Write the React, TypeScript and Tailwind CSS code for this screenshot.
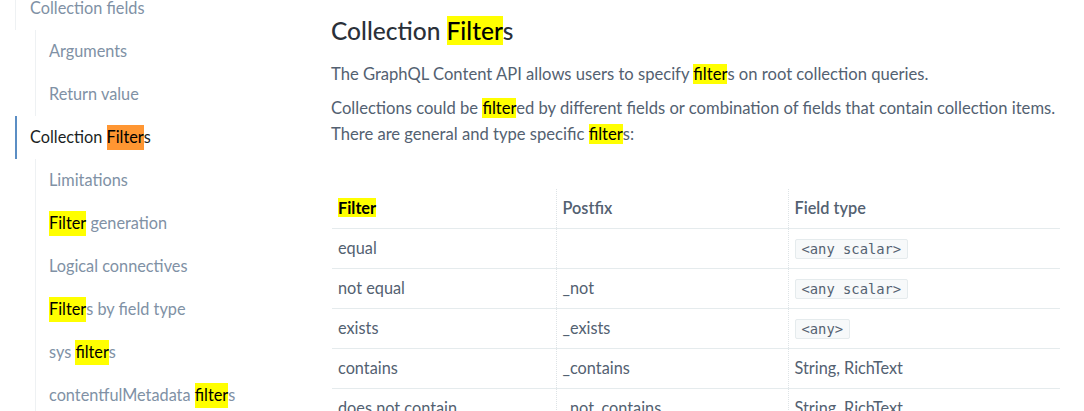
import React from "react";

const font = { fontFamily: "Lato, 'Noto Sans', sans-serif" };

function Hl({ children, active = false }: { children: React.ReactNode; active?: boolean }) {
  return <span className={`${active ? "bg-[#ff9632]" : "bg-[#ffff00]"} text-black`}>{children}</span>;
}

function Code({ children }: { children: React.ReactNode }) {
  return (
    <code className="inline-block rounded-[2px] border border-[#e5ebed] bg-[#f7f9fa] px-[6px] text-[13.8px] leading-[18px] text-[#536171] [font-family:'DejaVu_Sans_Mono',monospace]">
      {children}
    </code>
  );
}

const nested1 = ["Arguments", "Return value"];

const rows: { filter: string; postfix: string; type: React.ReactNode }[] = [
  { filter: "equal", postfix: "", type: <Code>{"<any scalar>"}</Code> },
  { filter: "not equal", postfix: "_not", type: <Code>{"<any scalar>"}</Code> },
  { filter: "exists", postfix: "_exists", type: <Code>{"<any>"}</Code> },
  { filter: "contains", postfix: "_contains", type: "String, RichText" },
  { filter: "does not contain", postfix: "_not_contains", type: "String, RichText" },
];

export default function App() {
  return (
    <div className="flex h-[411px] w-[1084px] overflow-hidden bg-white text-[16px]" style={font}>
      <aside className="w-[331px] shrink-0 pl-[15px]">
        <ul className="-mt-[13px] text-[16.3px] text-[#8091a5]">
          <li className="flex h-[43px] items-center border-l border-[#eef1f3] pl-[14px]">Collection fields</li>
          <li className="ml-[20px] border-l border-[#eef1f3]">
            {nested1.map((t) => (
              <div key={t} className="flex h-[43px] items-center pl-[13px]">{t}</div>
            ))}
          </li>
          <li className="flex h-[43px] items-center border-l-[2px] border-[#5b8ec4] pl-[13px] text-[#1b1f24]">
            Collection&nbsp;<Hl active>Filter</Hl>s
          </li>
          <li className="ml-[20px] border-l border-[#eef1f3]">
            <div className="flex h-[43px] items-center pl-[13px]">Limitations</div>
            <div className="flex h-[43px] items-center pl-[13px]"><Hl>Filter</Hl>&nbsp;generation</div>
            <div className="flex h-[43px] items-center pl-[13px]">Logical connectives</div>
            <div className="flex h-[43px] items-center pl-[13px]"><Hl>Filter</Hl>s by field type</div>
            <div className="flex h-[43px] items-center pl-[13px]">sys&nbsp;<Hl>filter</Hl>s</div>
            <div className="flex h-[43px] items-center pl-[13px]">contentfulMetadata&nbsp;<Hl>filter</Hl>s</div>
          </li>
        </ul>
      </aside>

      <main className="flex-1 pr-[24px] text-[#536171]">
        <h1 className="mt-[16px] text-[24.5px] font-medium leading-[30px] text-[#2a3039]">
          Collection <Hl>Filter</Hl>s
        </h1>
        <p className="mt-[15px] text-[16.6px] leading-[26px]">
          The GraphQL Content API allows users to specify <Hl>filter</Hl>s on root collection queries.
        </p>
        <p className="mt-[8px] text-[16.6px] leading-[26px]">
          Collections could be <Hl>filter</Hl>ed by different fields or combination of fields that contain collection items.
          <br />
          There are general and type specific <Hl>filter</Hl>s:
        </p>

        <table className="mt-[42px] ml-px w-[728px] border-collapse text-left text-[16.3px]">
          <thead>
            <tr className="h-[39px] border-b border-[#e5ebed]">
              <th className="w-[224px] px-[6px] font-bold text-black">
                <Hl>Filter</Hl>
              </th>
              <th className="w-[232px] border-l border-dotted border-[#dde3e6] px-[6px] font-semibold">Postfix</th>
              <th className="border-l border-dotted border-[#dde3e6] px-[6px] font-semibold">Field type</th>
            </tr>
          </thead>
          <tbody>
            {rows.map((r) => (
              <tr key={r.filter} className="h-[40px] border-b border-[#e5ebed]">
                <td className="px-[6px]">{r.filter}</td>
                <td className="border-l border-dotted border-[#dde3e6] px-[6px]">{r.postfix}</td>
                <td className="border-l border-dotted border-[#dde3e6] px-[6px]">{r.type}</td>
              </tr>
            ))}
          </tbody>
        </table>
      </main>
    </div>
  );
}
